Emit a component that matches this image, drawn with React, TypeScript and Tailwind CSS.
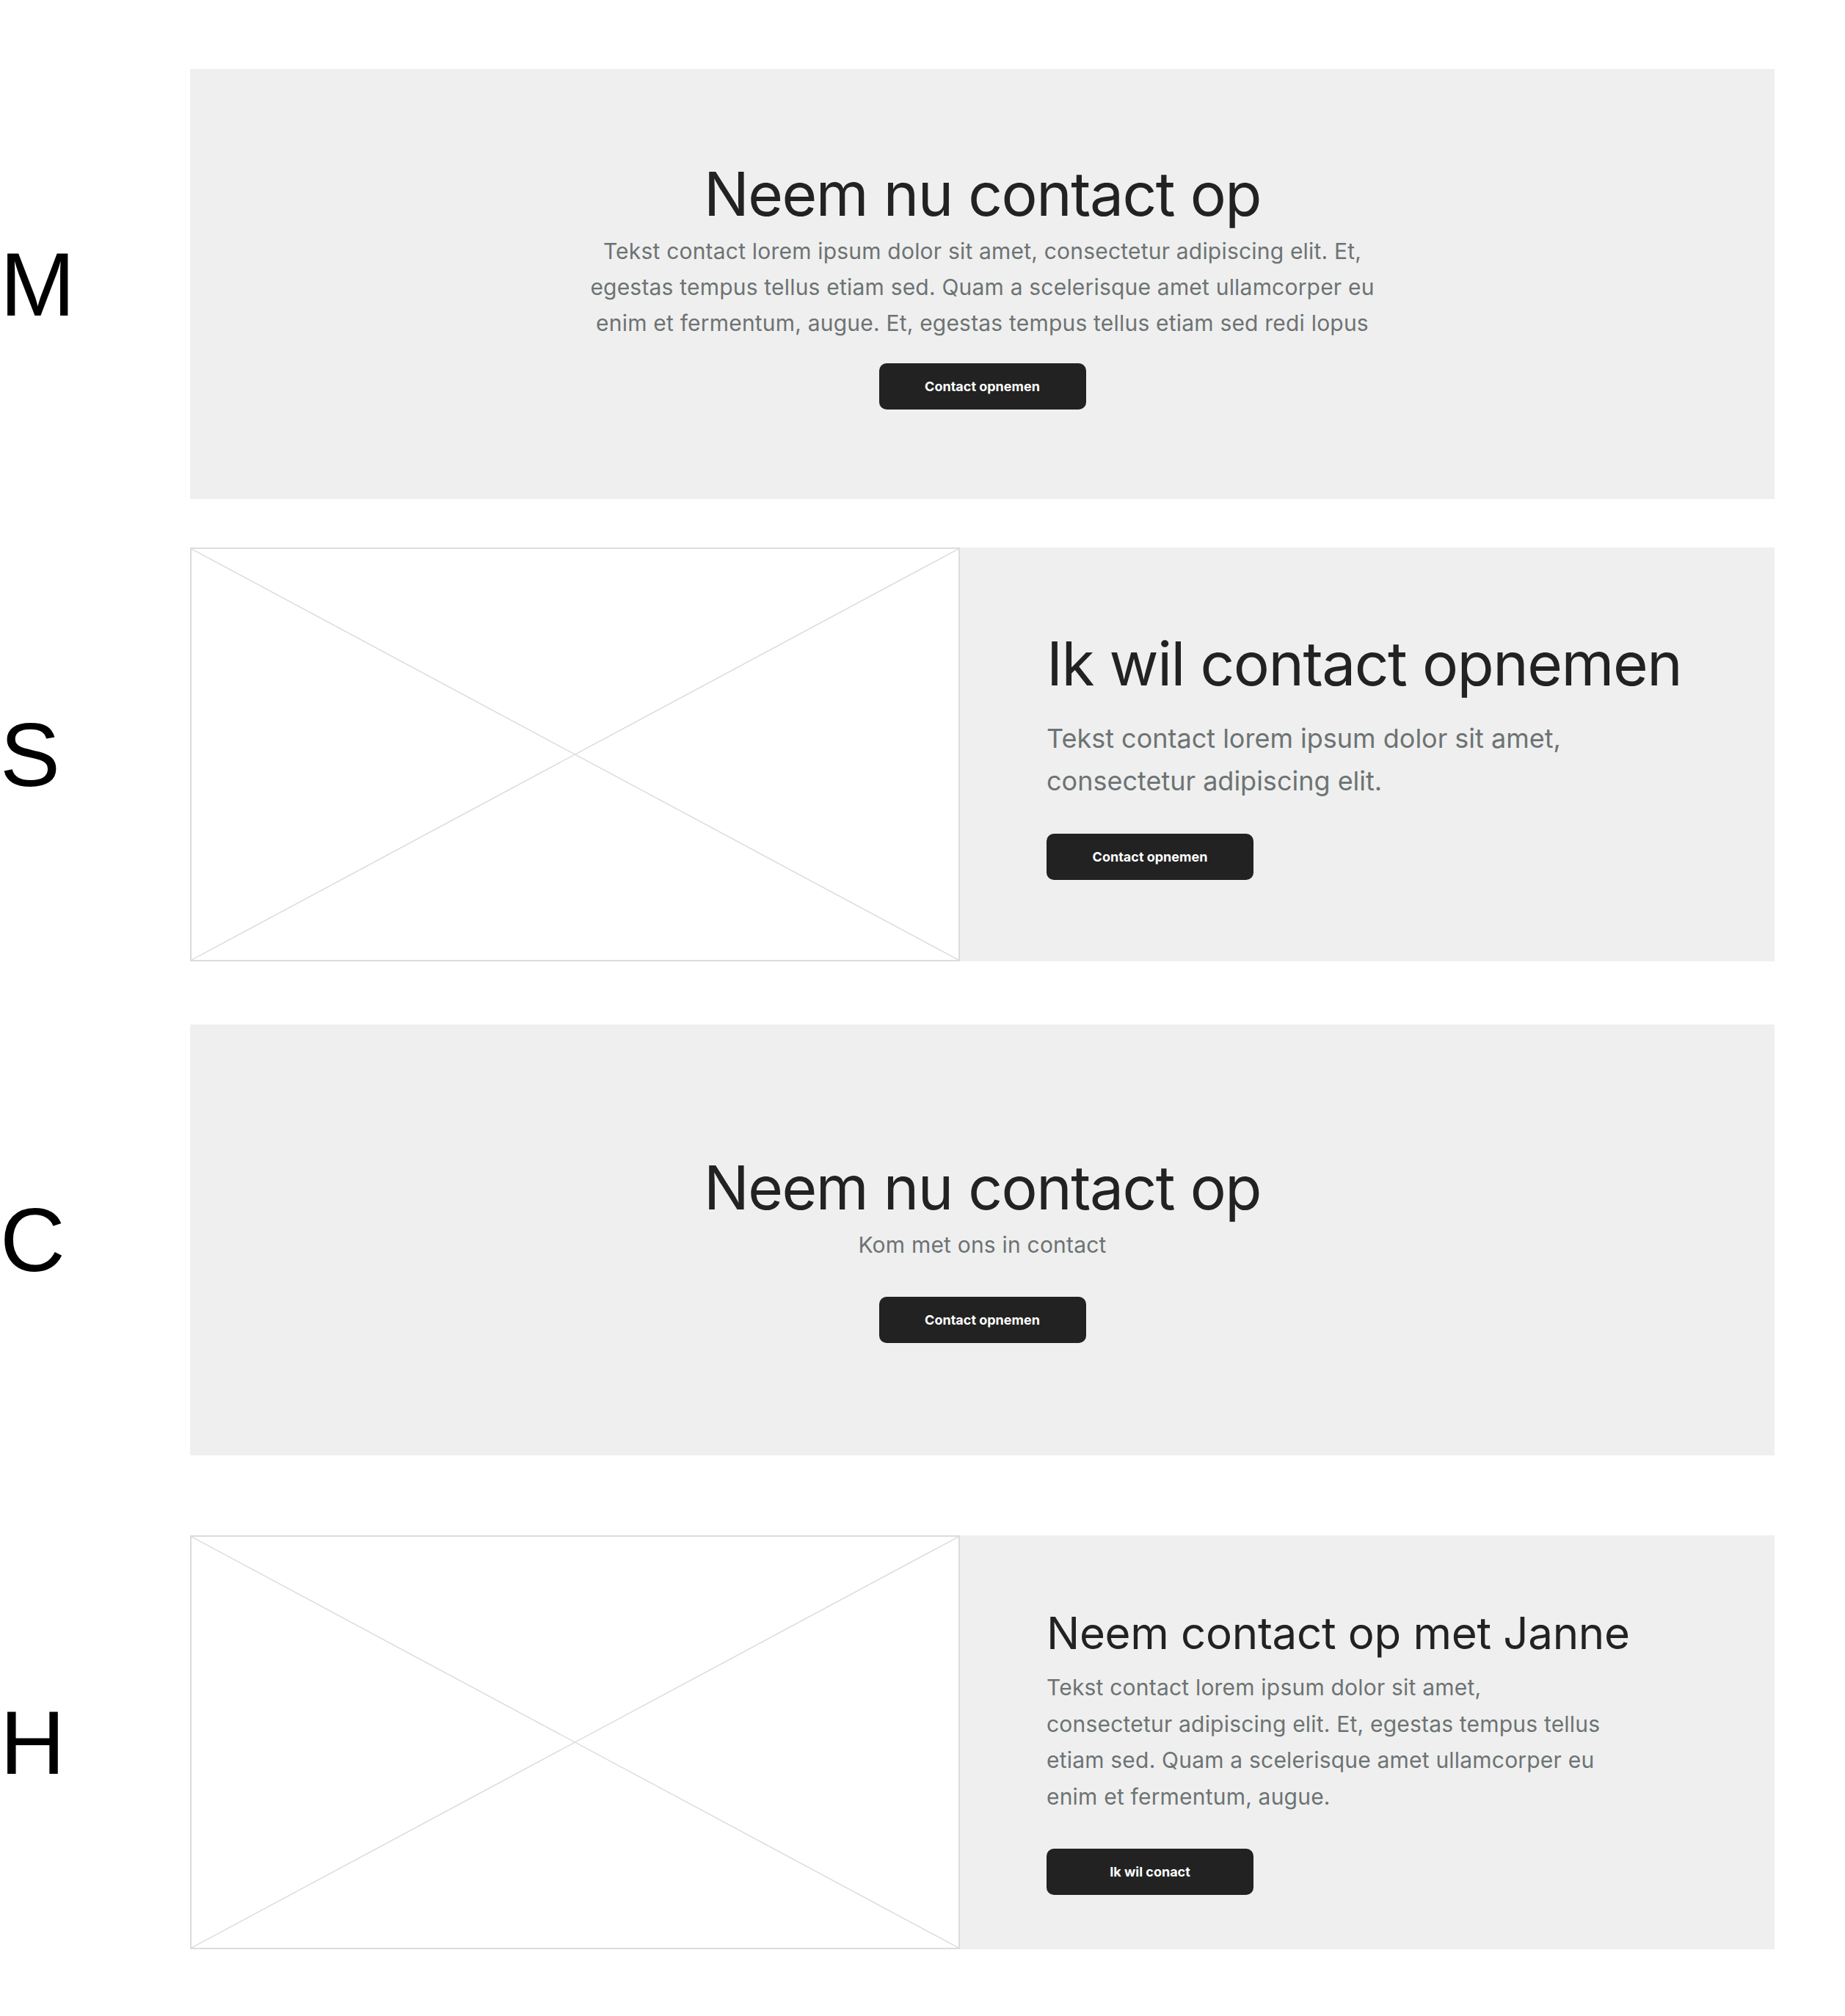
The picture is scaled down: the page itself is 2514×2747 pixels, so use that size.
import React from "react";

const font = { fontFamily: "Inter, 'Noto Sans', sans-serif" };

function Label({ children }: { children: React.ReactNode }) {
  return (
    <div
      className="w-[259px] shrink-0 text-[123px] leading-none text-black"
      style={{ fontFamily: "'Liberation Sans', Arial, sans-serif" }}
    >
      {children}
    </div>
  );
}

function Button({ children }: { children: React.ReactNode }) {
  return (
    <div className="flex h-[63px] w-[282px] items-center justify-center rounded-[10px] bg-[#222222] text-[18px] font-bold text-white">
      {children}
    </div>
  );
}

function Placeholder() {
  return (
    <div className="relative h-full w-[1049px] shrink-0 border-2 border-[#dcdcdc] bg-white">
      <svg className="absolute inset-0 h-full w-full" viewBox="0 0 100 100" preserveAspectRatio="none">
        <line x1="0" y1="0" x2="100" y2="100" stroke="#dcdcdc" strokeWidth="1.5" vectorEffect="non-scaling-stroke" />
        <line x1="100" y1="0" x2="0" y2="100" stroke="#dcdcdc" strokeWidth="1.5" vectorEffect="non-scaling-stroke" />
      </svg>
    </div>
  );
}

export default function App() {
  return (
    <div className="min-h-[2747px] w-[2514px] bg-white pb-[91px] pr-[96px] pt-[94px]" style={font}>
      {/* M */}
      <div className="flex items-center">
        <Label>M</Label>
        <div className="flex h-[586px] flex-1 flex-col items-center bg-[#efefef] pt-[122px] text-center">
          <h2 className="text-[82px] font-normal leading-[98px] tracking-[-1.5px] text-[#222222]">Neem nu contact op</h2>
          <p className="mt-[4px] text-[30px] leading-[49px] tracking-[0.2px] text-[#6d7373]">
            Tekst contact lorem ipsum dolor sit amet, consectetur adipiscing elit. Et,
            <br />
            egestas tempus tellus etiam sed. Quam a scelerisque amet ullamcorper eu
            <br />
            enim et fermentum, augue. Et, egestas tempus tellus etiam sed redi lopus
          </p>
          <div className="mt-[30px]">
            <Button>Contact opnemen</Button>
          </div>
        </div>
      </div>

      {/* S */}
      <div className="mt-[66px] flex items-center">
        <Label>S</Label>
        <div className="flex h-[564px] flex-1">
          <Placeholder />
          <div className="flex flex-1 flex-col items-start bg-[#efefef] pl-[118px] pt-[110px]">
            <h2 className="text-[82px] font-normal leading-[98px] tracking-[-1.5px] text-[#222222]">Ik wil contact opnemen</h2>
            <p className="mt-[23px] text-[36px] leading-[58px] text-[#6d7373]">
              Tekst contact lorem ipsum dolor sit amet,
              <br />
              consectetur adipiscing elit.
            </p>
            <div className="mt-[43px]">
              <Button>Contact opnemen</Button>
            </div>
          </div>
        </div>
      </div>

      {/* C */}
      <div className="mt-[86px] flex items-center">
        <Label>C</Label>
        <div className="flex h-[587px] flex-1 flex-col items-center bg-[#efefef] pt-[174px] text-center">
          <h2 className="text-[82px] font-normal leading-[98px] tracking-[-1.5px] text-[#222222]">Neem nu contact op</h2>
          <p className="mt-[4px] text-[30px] leading-[49px] tracking-[0.2px] text-[#6d7373]">Kom met ons in contact</p>
          <div className="mt-[46px]">
            <Button>Contact opnemen</Button>
          </div>
        </div>
      </div>

      {/* H */}
      <div className="mt-[109px] flex items-center">
        <Label>H</Label>
        <div className="flex h-[564px] flex-1">
          <Placeholder />
          <div className="flex flex-1 flex-col items-start bg-[#efefef] pl-[118px] pt-[97px]">
            <h2 className="text-[60px] font-normal leading-[72px] tracking-[-0.3px] text-[#222222]">Neem contact op met Janne</h2>
            <p className="mt-[14px] text-[30px] leading-[49.5px] tracking-[0.2px] text-[#6d7373]">
              Tekst contact lorem ipsum dolor sit amet,
              <br />
              consectetur adipiscing elit. Et, egestas tempus tellus
              <br />
              etiam sed. Quam a scelerisque amet ullamcorper eu
              <br />
              enim et fermentum, augue.
            </p>
            <div className="mt-[46px]">
              <Button>Ik wil conact</Button>
            </div>
          </div>
        </div>
      </div>
    </div>
  );
}
